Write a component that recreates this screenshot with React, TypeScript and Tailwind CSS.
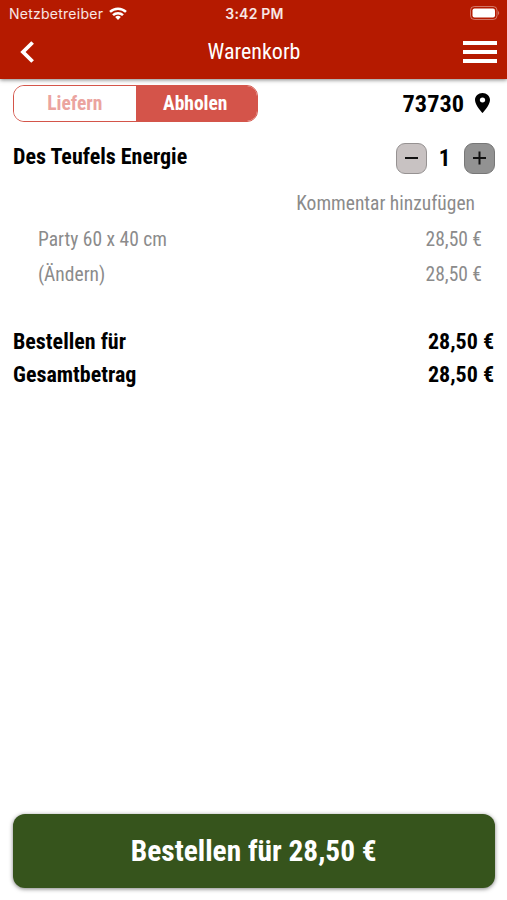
import { clsx } from "clsx";
import { useState } from "react";

type Mode = "Liefern" | "Abholen";

const modes: Mode[] = ["Liefern", "Abholen"];

const positions = [
  { label: "Party 60 x 40 cm", price: "28,50 €" },
  { label: "(Ändern)", price: "28,50 €" }
];

const totals = [
  { label: "Bestellen für", price: "28,50 €" },
  { label: "Gesamtbetrag", price: "28,50 €" }
];

function StatusBar() {
  return (
    <div className="grid h-[26px] grid-cols-3 items-center pl-[9px] pr-[7px] pt-0.5 font-['Inter',sans-serif] text-[14px] leading-none text-white/90 [font-stretch:normal]">
      <div className="flex items-center gap-1.5 tracking-[0.25px]">
        Netzbetreiber
        <svg className="-mt-0.5 h-[13px] w-[18px] shrink-0" viewBox="0 0 18 13" fill="none" stroke="#fff" strokeWidth="2.5">
          <path d="M1 4.9a11.5 11.5 0 0 1 16 0" />
          <path d="M4 8.200a7.2 7.2 0 0 1 10 0" />
          <path d="M9 13 6.2 10.1a4 4 0 0 1 5.6 0Z" fill="#fff" stroke="none" />
        </svg>
      </div>
      <span className="text-center font-semibold tracking-[0.2px]">3:42 PM</span>
      <svg className="-mt-0.5 h-[14px] w-[30px] justify-self-end" viewBox="0 0 30 14">
        <rect x="0.5" y="0.5" width="26.5" height="13" rx="3.8" fill="none" stroke="#fff" strokeOpacity="0.4" />
        <rect x="2.5" y="2.5" width="22.5" height="9" rx="2" fill="#fff" />
        <path d="M28 5v4c1.6-.6 1.6-3.4 0-4Z" fill="#fff" fillOpacity="0.4" />
      </svg>
    </div>
  );
}

function Header() {
  return (
    <header className="h-[79px] bg-[#b51a00] shadow-[0_1px_4px_rgba(0,0,0,0.5)]">
      <StatusBar />
      <div className="grid h-[51px] grid-cols-[1fr_auto_1fr] items-center px-[10px] text-white">
        <button className="ml-[10px] justify-self-start" aria-label="Zurück">
          <svg className="h-[22px] w-[14px]" viewBox="0 0 14 22" fill="none" stroke="#fff" strokeWidth="3.8">
            <path d="M12.6 1.5 3 11l9.600 9.500" />
          </svg>
        </button>
        <h1 className="pl-px text-[22px] leading-none">Warenkorb</h1>
        <button className="flex w-[34px] flex-col gap-[5px] justify-self-end" aria-label="Menü">
          <span className="h-1 bg-white" />
          <span className="h-1 bg-white" />
          <span className="h-1 bg-white" />
        </button>
      </div>
    </header>
  );
}

function ModeSwitch({ value, onChange }: { value: Mode; onChange: (mode: Mode) => void }) {
  return (
    <div className="grid h-[37px] w-[245px] grid-cols-2 overflow-hidden rounded-[11px] border border-[#d4554a]">
      {modes.map((mode) => (
        <button
          key={mode}
          className={clsx(
            "text-[19.5px] font-bold leading-none",
            mode === value ? "bg-[#d4544a] pr-0.5 text-white" : "bg-white text-[#eba49f]"
          )}
          onClick={() => onChange(mode)}
        >
          {mode}
        </button>
      ))}
    </div>
  );
}

function Stepper() {
  return (
    <div className="-mr-[0.5px] flex items-center">
      <button className="h-[31px] w-[31px] rounded-[9px] border border-[#969292] bg-[#c8c2c2]" aria-label="Weniger">
        <svg viewBox="0 0 29 29" stroke="#111" strokeWidth="2">
          <path d="M8 14h13" />
        </svg>
      </button>
      <span className="w-[37px] pr-px text-center text-[23px] font-bold leading-none">1</span>
      <button className="h-[31px] w-[31px] rounded-[9px] border border-[#777] bg-[#929292]" aria-label="Mehr">
        <svg viewBox="0 0 29 29" stroke="#111" strokeWidth="2">
          <path d="M8 14h13M14.500 7.500v13" />
        </svg>
      </button>
    </div>
  );
}

export default function App() {
  const [mode, setMode] = useState<Mode>("Abholen");

  return (
    <div className="flex h-[900px] w-[507px] flex-col bg-white font-['Roboto_Condensed','Roboto',sans-serif] text-black [font-stretch:75%]">
      <Header />
      <main className="flex-1 px-[13px] pt-1.5">
        <div className="flex items-center justify-between">
          <ModeSwitch value={mode} onChange={setMode} />
          <div className="flex items-center gap-[11px] pr-1">
            <span className="pt-0.5 text-[24.3px] font-bold leading-none">73730</span>
            <svg className="h-[20px] w-[15px]" viewBox="5 2 14 20" preserveAspectRatio="none">
              <path d="M12 2C8.13 2 5 5.13 5 9c0 5.25 7 13 7 13s7-7.75 7-13c0-3.87-3.13-7-7-7zm0 9.500a2.500 2.500 0 0 1 0-5 2.500 2.500 0 0 1 0 5z" />
            </svg>
          </div>
        </div>

        <div className="mt-[21px] flex items-start justify-between">
          <h2 className="text-[22px] font-bold leading-[27px]">Des Teufels Energie</h2>
          <Stepper />
        </div>
        <div className="text-[19.5px] leading-[35.5px] text-[#8b8b8b]">
          <p className="mt-[12px] pr-[19px] text-right">Kommentar hinzufügen</p>
          {positions.map((item) => (
            <div key={item.label} className="flex justify-between pl-[25px] pr-[12px]">
              <span>{item.label}</span>
              <span>{item.price}</span>
            </div>
          ))}
        </div>

        <div className="mt-[32.5px] text-[22px] font-bold leading-[33px]">
          {totals.map((total) => (
            <div key={total.label} className="flex justify-between">
              <span>{total.label}</span>
              <span>{total.price}</span>
            </div>
          ))}
        </div>
      </main>
      <footer className="pb-3 pl-[13px] pr-[12.5px]">
        <button className="h-[74px] w-full rounded-xl bg-[#36541c] pt-0.5 text-[29.4px] font-bold leading-none text-white shadow-[0_1px_4px_rgba(0,0,0,0.5)]">
          Bestellen für 28,50 €
        </button>
      </footer>
    </div>
  );
}
